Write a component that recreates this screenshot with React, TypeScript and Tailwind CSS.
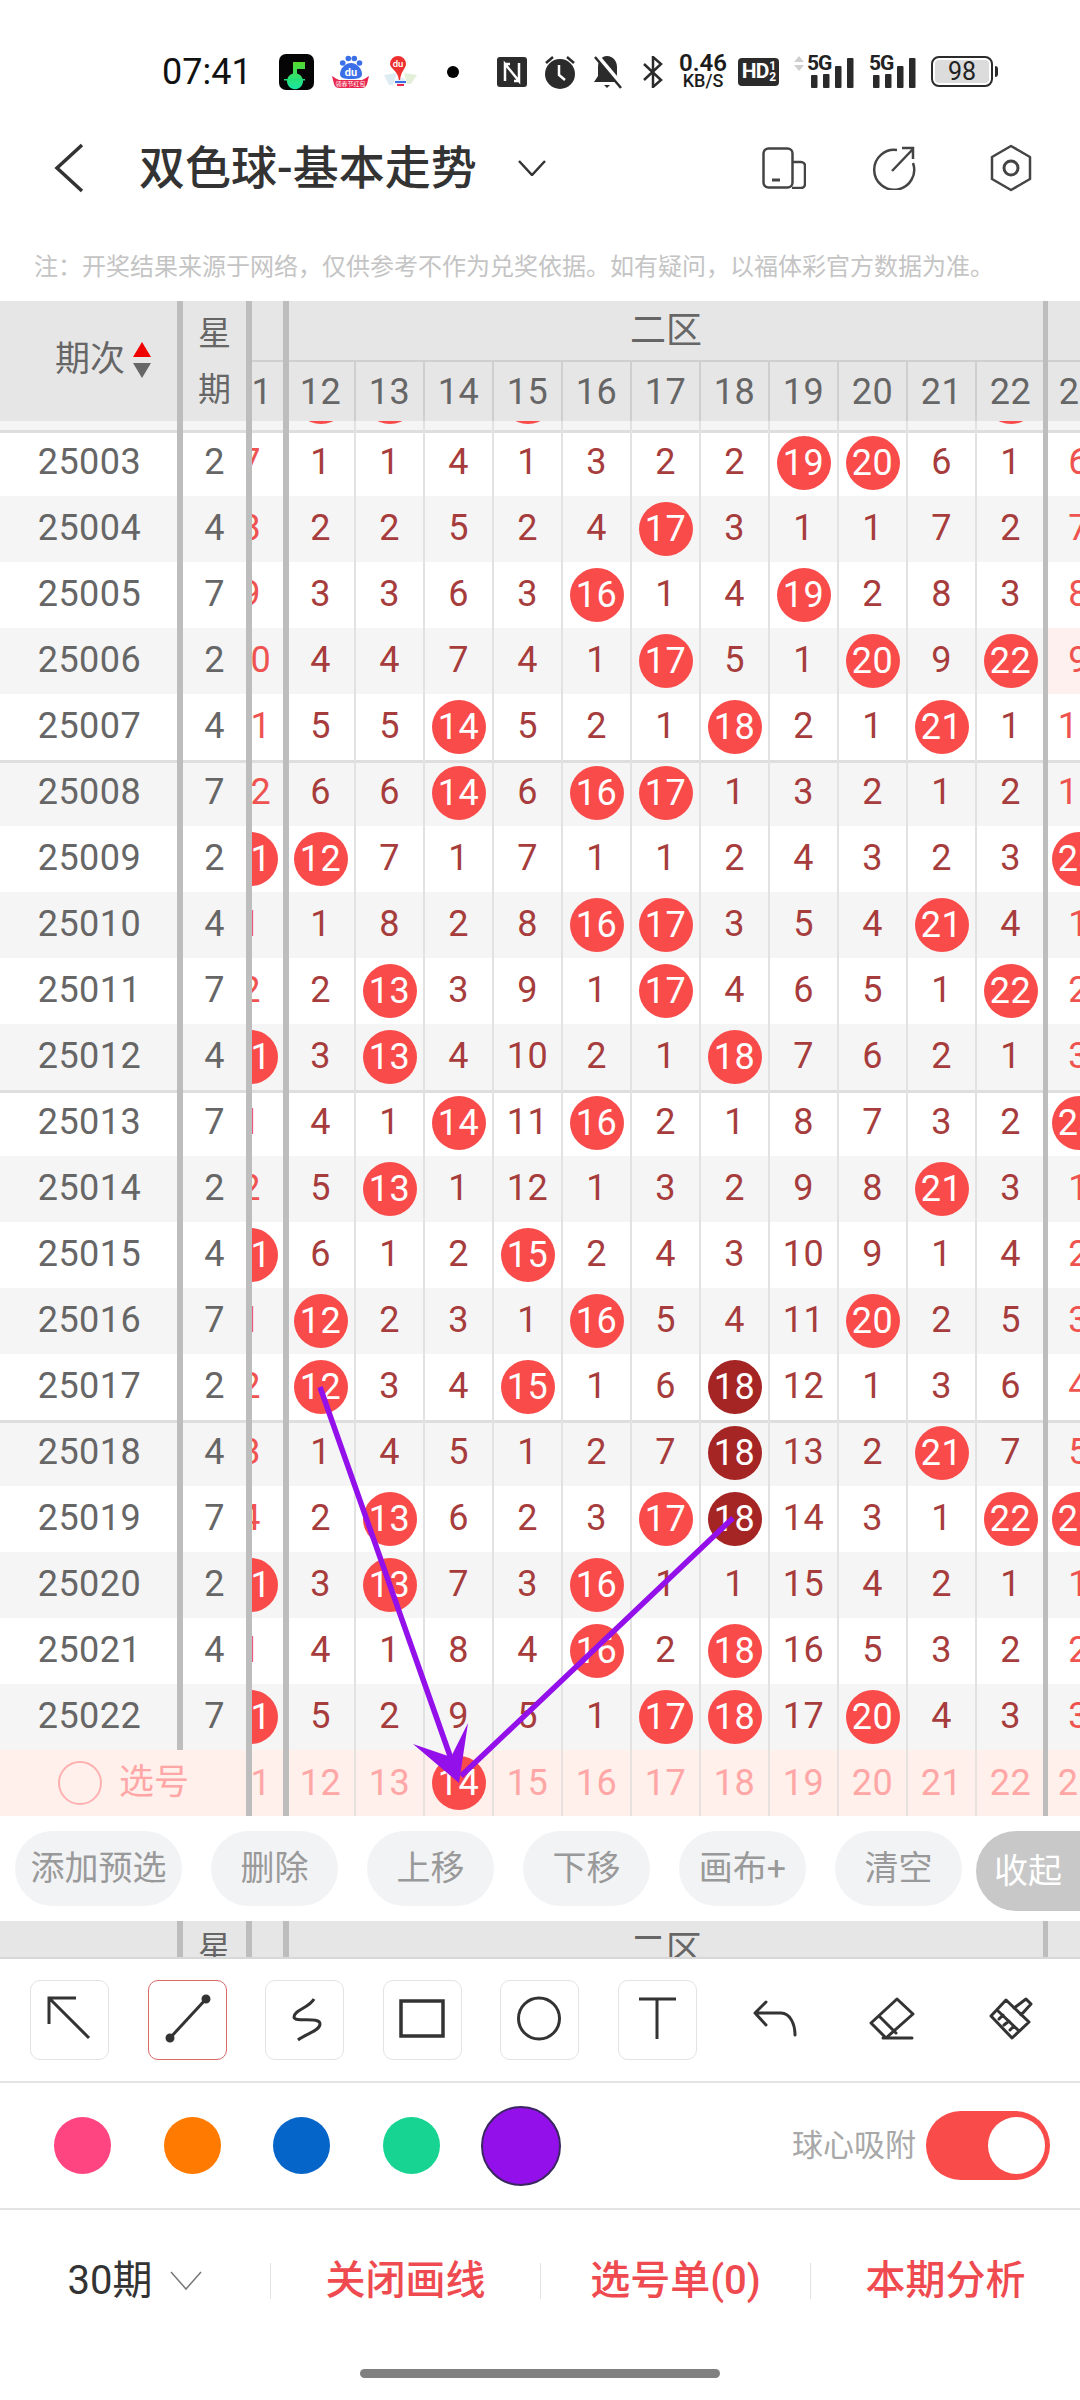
const rows: [number, number, number[]][] = [
  // 0 = hit ball, -1 = dark ball, columns run 11..23
  [25002, 7, [6, 0, 0, 3, 0, 2, 1, 1, 18, 19, 5, 0, 5]],
  [25003, 2, [7, 1, 1, 4, 1, 3, 2, 2, 0, 0, 6, 1, 6]],
  [25004, 4, [8, 2, 2, 5, 2, 4, 0, 3, 1, 1, 7, 2, 7]],
  [25005, 7, [9, 3, 3, 6, 3, 0, 1, 4, 0, 2, 8, 3, 8]],
  [25006, 2, [10, 4, 4, 7, 4, 1, 0, 5, 1, 0, 9, 0, 9]],
  [25007, 4, [11, 5, 5, 0, 5, 2, 1, 0, 2, 1, 0, 1, 10]],
  [25008, 7, [12, 6, 6, 0, 6, 0, 0, 1, 3, 2, 1, 2, 11]],
  [25009, 2, [0, 0, 7, 1, 7, 1, 1, 2, 4, 3, 2, 3, 0]],
  [25010, 4, [1, 1, 8, 2, 8, 0, 0, 3, 5, 4, 0, 4, 1]],
  [25011, 7, [2, 2, 0, 3, 9, 1, 0, 4, 6, 5, 1, 0, 2]],
  [25012, 4, [0, 3, 0, 4, 10, 2, 1, 0, 7, 6, 2, 1, 3]],
  [25013, 7, [1, 4, 1, 0, 11, 0, 2, 1, 8, 7, 3, 2, 0]],
  [25014, 2, [2, 5, 0, 1, 12, 1, 3, 2, 9, 8, 0, 3, 1]],
  [25015, 4, [0, 6, 1, 2, 0, 2, 4, 3, 10, 9, 1, 4, 2]],
  [25016, 7, [1, 0, 2, 3, 1, 0, 5, 4, 11, 0, 2, 5, 3]],
  [25017, 2, [2, 0, 3, 4, 0, 1, 6, -1, 12, 1, 3, 6, 4]],
  [25018, 4, [3, 1, 4, 5, 1, 2, 7, -1, 13, 2, 0, 7, 5]],
  [25019, 7, [4, 2, 0, 6, 2, 3, 0, -1, 14, 3, 1, 0, 0]],
  [25020, 2, [0, 3, 0, 7, 3, 0, 1, 1, 15, 4, 2, 1, 1]],
  [25021, 4, [1, 4, 1, 8, 4, 0, 2, 0, 16, 5, 3, 2, 2]],
  [25022, 7, [0, 5, 2, 9, 5, 1, 0, 0, 17, 0, 4, 3, 3]],
];

const mainCols = [12, 13, 14, 15, 16, 17, 18, 19, 20, 21, 22];

function Bar({ className = '' }: { className?: string }) {
  return <div className={`relative z-10 shrink-0 self-stretch bg-[#bdbdbd] ${className}`} />;
}

function Ball({ n, dark }: { n: number; dark?: boolean }) {
  return (
    <div className={`flex h-[54px] w-[54px] items-center justify-center rounded-full text-white ${dark ? 'bg-[#a52525]' : 'bg-[#fa4b4b]'}`}>
      {n}
    </div>
  );
}

function Cell({ col, value, edge, pink }: { col: number; value: number; edge?: boolean; pink?: boolean }) {
  return (
    <div className={`flex h-full w-[69px] shrink-0 items-center justify-center border-r-2 border-[#e2e2e2] ${edge ? 'text-[#ef5350]' : 'text-[#a63c3c]'} ${pink ? 'bg-[#fff0f0]' : ''} ${value > 0 ? 'pb-[2px]' : ''}`}>
      {value === 0 ? <Ball n={col} /> : value === -1 ? <Ball n={col} dark /> : value}
    </div>
  );
}

function Row({ id, week, cells, index }: { id: number; week: number; cells: number[]; index: number }) {
  const grouped = (id - 25003) % 5 === 0;
  return (
    <div className={`relative flex h-[66px] overflow-hidden text-[36px] tracking-[0.5px] ${index % 2 === 0 ? 'bg-[#f5f5f5]' : 'bg-white'} ${grouped ? 'shadow-[inset_0_3px_0_#dedede]' : ''}`}>
      <div className="flex w-[177px] shrink-0 items-center justify-center pb-[2px] pl-[2px] text-[#666]">{id}</div>
      <Bar className="w-[6px]" />
      <div className="flex w-[63px] shrink-0 items-center justify-center pb-[2px] text-[#666]">{week}</div>
      <Bar className="w-[6px]" />
      <div className="h-full w-[31px] shrink-0 overflow-hidden">
        <div className="-ml-[35px] h-full w-[69px]">
          <Cell col={11} value={cells[0]} edge />
        </div>
      </div>
      <Bar className="w-[6px]" />
      <div className="-ml-[2px] flex shrink-0">
        {mainCols.map((c, i) => (
          <Cell key={c} col={c} value={cells[i + 1]} />
        ))}
      </div>
      <Bar className="-ml-[3px] w-[5px]" />
      <div className="-ml-[3px] shrink-0">
        <Cell col={23} value={cells[12]} edge pink={id === 25006} />
      </div>
    </div>
  );
}

function PickCell({ n, ball }: { n: number; ball?: boolean }) {
  return (
    <div className="flex h-full w-[69px] shrink-0 items-center justify-center border-r-2 border-[#e8e2df] text-[#ffa6a6]">
      {ball ? <Ball n={n} /> : n}
    </div>
  );
}

function TableHead() {
  return (
    <div className="flex h-[120px] shrink-0 overflow-hidden bg-[#e6e6e6] text-[36px] tracking-[0.5px] text-[#666]">
      <div className="flex w-[177px] shrink-0 items-center pb-[2px] pl-[55px] text-[35px] tracking-normal">
        期次
        <svg viewBox="0 0 18 36" className="ml-[8px] h-[36px] w-[18px]">
          <polygon points="9,0 18,15 0,15" fill="#f00000" />
          <polygon points="0,21 18,21 9,36" fill="#666" />
        </svg>
      </div>
      <Bar className="w-[6px]" />
      <div className="flex w-[63px] shrink-0 flex-col items-center justify-center gap-[23px] text-[33px] leading-[33px] tracking-normal">
        <span>星</span>
        <span>期</span>
      </div>
      <Bar className="w-[6px]" />
      <div className="flex w-[31px] shrink-0 flex-col overflow-hidden">
        <div className="h-[59px] shrink-0 border-b-2 border-[#cfcfcf] box-content" />
        <div className="-ml-[35px] flex flex-1 items-center">
          <div className="flex w-[69px] shrink-0 justify-center">11</div>
        </div>
      </div>
      <Bar className="w-[6px]" />
      <div className="flex w-[754px] shrink-0 flex-col">
        <div className="flex h-[61px] shrink-0 items-center justify-center border-b-2 border-[#cfcfcf] text-[36px] tracking-normal">二区</div>
        <div className="-ml-[2px] flex flex-1">
          {mainCols.map((c) => (
            <div key={c} className="flex w-[69px] shrink-0 items-center justify-center border-r-2 border-[#cfcfcf]">{c}</div>
          ))}
        </div>
      </div>
      <Bar className="w-[5px]" />
      <div className="flex w-[69px] shrink-0 flex-col">
        <div className="h-[61px] shrink-0 border-b-2 border-[#cfcfcf]" />
        <div className="-ml-[3px] flex flex-1 items-center">
          <div className="flex w-[69px] shrink-0 justify-center">23</div>
        </div>
      </div>
    </div>
  );
}

function SignalBars({ className }: { className: string }) {
  return (
    <div className={`relative h-[34px] w-[48px] shrink-0 ${className}`}>
      <span className="absolute -top-[2px] left-0 text-[21px] leading-[21px] font-bold tracking-[-1px] text-[#222]">5G</span>
      <svg viewBox="0 0 48 34" className="absolute inset-0 h-[34px] w-[48px]" fill="#2a2a2a">
        <rect x="4" y="20" width="6.500" height="13" rx="1" />
        <rect x="16" y="19" width="6.500" height="14" rx="1" />
        <rect x="28" y="11" width="6.500" height="22" rx="1" />
        <rect x="40" y="3" width="6.500" height="30" rx="1" />
      </svg>
    </div>
  );
}

function StatusBar() {
  return (
    <div className="flex h-[142px] shrink-0 items-center pl-[162px] pt-[1px]">
      <span className="w-[91px] shrink-0 text-[36px] leading-none text-[#111]">07:41</span>
      <svg viewBox="0 0 35 36" className="ml-[26px] h-[36px] w-[35px] shrink-0">
        <defs>
          <linearGradient id="note" x1="0" y1="0" x2="0" y2="1">
            <stop offset="0" stopColor="#55d92c" />
            <stop offset="1" stopColor="#16e6a4" />
          </linearGradient>
        </defs>
        <rect width="35" height="36" rx="7" fill="#050505" />
        <path d="M14 8h12v7h-8v4.500a8 8 0 1 1-4 0z" fill="url(#note)" />
        <rect x="5" y="25" width="21" height="1.500" fill="#1fe07a" />
      </svg>
      <svg viewBox="0 0 39 33" className="ml-[17px] h-[33px] w-[39px] shrink-0">
        <circle cx="11.700" cy="8" r="2.800" fill="#3a6fe8" />
        <circle cx="17.300" cy="3.500" r="2.800" fill="#3a6fe8" />
        <circle cx="23.300" cy="3.500" r="2.800" fill="#3a6fe8" />
        <circle cx="28.500" cy="8" r="2.800" fill="#3a6fe8" />
        <path d="M20 8c6 0 11 6 11 11 0 4-4 5-11 5S9 23 9 19c0-5 5-11 11-11z" fill="#3a6fe8" />
        <text x="20" y="21" textAnchor="middle" fontSize="11" fontWeight="700" fill="#fff">du</text>
        <path d="M1 21c3 2 5 3 7 4h23c2-1 4-2 7-4l-2 8c-1 3-3 4-5 4H8c-2 0-4-1-5-4z" fill="#e8264e" />
        <text x="19.500" y="31" textAnchor="middle" fontSize="6" fill="#fff">领春节红包</text>
      </svg>
      <svg viewBox="0 0 35 33" className="ml-[13px] h-[33px] w-[35px] shrink-0">
        <path d="M1 20l13-2-4 12H6z" fill="#dcecf2" />
        <path d="M34 20l-13-2 3 11h4z" fill="#e3efd8" />
        <path d="M12 29h11l-2-6h-7z" fill="#e8edf6" />
        <rect x="12" y="26" width="11" height="2" fill="#3a6fe8" />
        <rect x="14" y="29" width="7" height="2" fill="#e8264e" />
        <path d="M15 1a8 8 0 0 1 8 8c0 4-5 7-6 16h-1C15 16 7 13 7 9a8 8 0 0 1 8-8z" fill="#ee2f2f" />
        <text x="15" y="12" textAnchor="middle" fontSize="9.500" fontWeight="500" fill="#fff">du</text>
      </svg>
      <div className="ml-[29px] h-[12px] w-[12px] shrink-0 rounded-full bg-black" />
      <svg viewBox="0 0 30 30" className="ml-[38px] h-[30px] w-[30px] shrink-0">
        <rect width="30" height="30" rx="3" fill="#2b2b2b" />
        <path d="M8 24V7l14 17V6M8 7h5M22 24h-5" fill="none" stroke="#fff" strokeWidth="2.500" />
      </svg>
      <svg viewBox="0 0 32 34" className="ml-[17px] h-[34px] w-[32px] shrink-0">
        <circle cx="16" cy="19" r="15" fill="#2b2b2b" />
        <path d="M15 10v10l6 5" fill="none" stroke="#fff" strokeWidth="2.500" />
        <path d="M2 8l7-6M30 8l-7-6" stroke="#2b2b2b" strokeWidth="2.500" />
      </svg>
      <svg viewBox="0 0 32 34" className="ml-[16px] h-[34px] w-[32px] shrink-0">
        <path d="M15 1c6 0 10 5 10 11v9l4 6H2l4-6v-9C6 6 9 1 15 1z" fill="#2b2b2b" />
        <path d="M12 30h6l-3 3z" fill="#2b2b2b" />
        <path d="M5 1l26 31" stroke="#fff" strokeWidth="5" />
        <path d="M3 2l26 31" stroke="#2b2b2b" strokeWidth="2.500" />
      </svg>
      <svg viewBox="0 0 20 32" className="ml-[19px] h-[32px] w-[20px] shrink-0">
        <path d="M1 8l17 16-8 7V1l8 7L1 24" fill="none" stroke="#2b2b2b" strokeWidth="2.500" />
      </svg>
      <div className="ml-[15px] flex w-[50px] shrink-0 flex-col items-center text-[#1c1c1c]">
        <span className="text-[24px] leading-[19px] font-semibold">0.46</span>
        <span className="text-[18px] leading-[16px] font-medium">KB/S</span>
      </div>
      <div className="ml-[10px] flex h-[28px] w-[41px] shrink-0 items-center justify-center gap-[1px] rounded-[4px] bg-[#2b2b2b] text-[21px] font-bold tracking-[-1px] text-white">
        HD
        <span className="flex flex-col text-[12px] leading-[11px]">
          <span>1</span>
          <span>2</span>
        </span>
      </div>
      <svg viewBox="0 0 10 16" className="ml-[15px] -mt-[16px] h-[16px] w-[10px] shrink-0" fill="#cfcfcf">
        <polygon points="5,0 10,6 0,6" />
        <polygon points="0,9 10,9 5,15" />
      </svg>
      <SignalBars className="ml-[3px]" />
      <SignalBars className="ml-[14px]" />
      <div className="relative ml-[14px] flex h-[31px] w-[62px] shrink-0 items-center justify-center rounded-[8px] border-[2.500px] border-[#2b2b2b] p-[2px]">
        <div className="flex h-full w-full items-center justify-center rounded-[4px] bg-[#dcdcdc] text-[25px] leading-none text-[#222]">98</div>
      </div>
      <div className="ml-[2px] h-[11px] w-[3px] shrink-0 rounded-r-sm bg-[#2b2b2b]" />
    </div>
  );
}

function TitleBar() {
  return (
    <div className="relative flex h-[52px] shrink-0 items-center pl-[54px] text-[#333]">
      <svg viewBox="0 0 30 50" className="h-[50px] w-[30px] shrink-0">
        <path d="M28 2L3 25l25 23" fill="none" stroke="#333" strokeWidth="3.500" />
      </svg>
      <span className="ml-[55px] w-[341px] shrink-0 text-[46px] leading-none font-medium whitespace-nowrap">双色球-基本走势</span>
      <svg viewBox="0 0 28 16" className="ml-[38px] h-[16px] w-[28px] shrink-0">
        <path d="M1 1l13 14L27 1" fill="none" stroke="#333" strokeWidth="2.500" />
      </svg>
      <svg viewBox="0 0 44 42" className="ml-[216px] h-[42px] w-[44px] shrink-0" fill="none" stroke="#444" strokeWidth="2.500">
        <rect x="1.500" y="1.500" width="29" height="39" rx="5" />
        <path d="M31 15h8a4 4 0 0 1 4 4v18a4 4 0 0 1-4 4h-9" />
        <path d="M10 33h8" strokeWidth="3" />
      </svg>
      <svg viewBox="0 0 44 44" className="ml-[66px] h-[44px] w-[44px] shrink-0" fill="none" stroke="#444" strokeWidth="2.500">
        <path d="M25 4A20 20 0 1 0 41 17" />
        <path d="M20 25L41 3M30 2h11v11" />
      </svg>
      <svg viewBox="0 0 44 48" className="ml-[73px] h-[48px] w-[44px] shrink-0" fill="none" stroke="#444" strokeWidth="2.500">
        <path d="M22 2l19 11v22L22 46 3 35V13z" strokeLinejoin="round" />
        <circle cx="22" cy="24" r="7" strokeWidth="3" />
      </svg>
    </div>
  );
}

const toolIcons = [
  <path key="a" d="M19 44V18h27M19 18l40 40" />,
  <g key="l"><path d="M22 58L58 19" /><circle cx="22" cy="58" r="3" fill="#333" /><circle cx="58" cy="19" r="3" fill="#333" /></g>,
  <path key="s" d="M49 19C44 28 29 30 29 37C29 43 55 36 55 44C55 51 40 54 33 60" />,
  <rect key="r" x="18" y="21" width="42" height="35" strokeWidth="3.500" />,
  <circle key="c" cx="39" cy="38.500" r="20.500" />,
  <path key="t" d="M21 19h37M39 19v40" />,
];

export default function App() {
  return (
    <div className="relative flex h-[2400px] w-[1080px] flex-col overflow-hidden bg-white font-['Roboto','Noto_Sans_CJK_SC',sans-serif]">
      <StatusBar />
      <TitleBar />
      <div className="flex h-[107px] shrink-0 items-center pl-[34px] pt-[39px] text-[24px] leading-none text-[#c4c4c4]">
        注：开奖结果来源于网络，仅供参考不作为兑奖依据。如有疑问，以福体彩官方数据为准。
      </div>

      <TableHead />

      <div className="h-[1329px] shrink-0 overflow-hidden">
        <div className="-mt-[57px]">
          {rows.map(([id, week, cells], i) => (
            <Row key={id} id={id} week={week} cells={cells} index={i} />
          ))}
        </div>
      </div>

      {/* 选号 row */}
      <div className="flex h-[66px] shrink-0 overflow-hidden bg-[#fff0eb] text-[36px] tracking-[0.5px]">
        <div className="flex w-[246px] shrink-0 items-center pl-[58px] text-[35px] tracking-normal text-[#ffa6a6]">
          <div className="h-[44px] w-[44px] shrink-0 rounded-full border-2 border-[#ffb0b0]" />
          <span className="ml-[17px]">选号</span>
        </div>
        <Bar className="w-[6px]" />
        <div className="h-full w-[31px] shrink-0 overflow-hidden">
          <div className="-ml-[35px] h-full w-[69px]">
            <PickCell n={11} />
          </div>
        </div>
        <Bar className="w-[6px]" />
        <div className="-ml-[2px] flex shrink-0">
          {mainCols.map((c) => (
            <PickCell key={c} n={c} ball={c === 14} />
          ))}
        </div>
        <Bar className="-ml-[3px] w-[5px]" />
        <div className="-ml-[3px] shrink-0">
          <PickCell n={23} />
        </div>
      </div>

      {/* action buttons */}
      <div className="relative flex h-[105px] shrink-0 items-start pl-[15px] pt-[15px] text-[34px] text-[#999]">
        <div className="flex h-[75px] w-[167px] shrink-0 items-center justify-center rounded-full bg-[#f2f3f5]">添加预选</div>
        <div className="ml-[29px] flex h-[75px] w-[127px] shrink-0 items-center justify-center rounded-full bg-[#f2f3f5]">删除</div>
        <div className="ml-[29px] flex h-[75px] w-[127px] shrink-0 items-center justify-center rounded-full bg-[#f2f3f5]">上移</div>
        <div className="ml-[29px] flex h-[75px] w-[127px] shrink-0 items-center justify-center rounded-full bg-[#f2f3f5]">下移</div>
        <div className="ml-[29px] flex h-[75px] w-[127px] shrink-0 items-center justify-center rounded-full bg-[#f2f3f5]">画布+</div>
        <div className="ml-[29px] flex h-[75px] w-[127px] shrink-0 items-center justify-center rounded-full bg-[#f2f3f5]">清空</div>
        <div className="absolute left-[976px] top-[15px] flex h-[80px] w-[104px] items-center rounded-l-full bg-[#c8c8c8] pl-[18px] text-[34px] whitespace-nowrap text-white">收起</div>
      </div>

      {/* next table's header, cut by the toolbar */}
      <div className="flex h-[38px] shrink-0 overflow-hidden border-b-2 border-[#d8d8d8] bg-[#e6e6e6] text-[33px] text-[#666]">
        <div className="w-[177px] shrink-0" />
        <Bar className="w-[6px]" />
        <div className="flex w-[63px] shrink-0 justify-center pt-[11px] leading-[33px]">星</div>
        <Bar className="w-[6px]" />
        <div className="w-[31px] shrink-0" />
        <Bar className="w-[6px]" />
        <div className="flex w-[754px] shrink-0 justify-center pt-[11px] text-[36px] leading-[36px]">二区</div>
        <Bar className="w-[5px]" />
      </div>

      {/* drawing tools */}
      <div className="flex h-[124px] shrink-0 items-start border-b-2 border-[#e4e4e4] pl-[30px] pt-[21px]">
        {toolIcons.map((icon, i) => (
          <div key={i} className={`mr-[38.500px] h-[80px] w-[79px] shrink-0 rounded-[10px] border ${i === 1 ? 'border-[#d9696b]' : 'border-[#e3e3e3]'}`}>
            <svg viewBox="0 0 79 80" className="-m-px h-[80px] w-[79px]" fill="none" stroke="#333" strokeWidth="3">
              {icon}
            </svg>
          </div>
        ))}
        <svg viewBox="0 0 44 38" className="ml-[18px] mt-[20px] h-[38px] w-[44px] shrink-0" fill="none" stroke="#333" strokeWidth="3" strokeLinecap="round" strokeLinejoin="round">
          <path d="M13 2L2 13l11 12M2 13H28C37 13 42 24 42 35" />
        </svg>
        <svg viewBox="0 0 46 43" className="ml-[72px] mt-[17px] h-[43px] w-[46px] shrink-0" fill="none" stroke="#333" strokeWidth="3" strokeLinecap="round" strokeLinejoin="round">
          <path d="M28 2l16 15-27 24L2 26zM10 19l17 17M14 41h29" />
        </svg>
        <svg viewBox="0 0 44 44" className="ml-[74px] mt-[17px] h-[44px] w-[44px] shrink-0" fill="none" stroke="#333" strokeWidth="3" strokeLinecap="round" strokeLinejoin="round">
          <path d="M17 3L2 19l21 22 17-16zM25 11L37 2l5 5-10 11M8 13l22 21M10 22l4-4M15 28l5-4M21 33l4-4" />
        </svg>
      </div>

      {/* colours + snap switch */}
      <div className="flex h-[127px] shrink-0 items-center border-b-2 border-[#e4e4e4] pl-[54px]">
        <div className="h-[57px] w-[57px] shrink-0 rounded-full bg-[#ff4581]" />
        <div className="ml-[53px] h-[57px] w-[57px] shrink-0 rounded-full bg-[#ff7a00]" />
        <div className="ml-[52px] h-[57px] w-[57px] shrink-0 rounded-full bg-[#0565c9]" />
        <div className="ml-[53px] h-[57px] w-[57px] shrink-0 rounded-full bg-[#18d492]" />
        <div className="ml-[41px] h-[80px] w-[80px] shrink-0 rounded-full border-2 border-[#3a2660] bg-[#9410ea]" />
        <span className="ml-[231px] w-[126px] shrink-0 text-[31px] leading-none whitespace-nowrap text-[#a8a8a8]">球心吸附</span>
        <div className="ml-[8px] flex h-[69px] w-[124px] shrink-0 items-center justify-end rounded-full bg-[#fa4b4b] pr-[5px]">
          <div className="h-[57px] w-[57px] rounded-full bg-white" />
        </div>
      </div>

      {/* bottom actions */}
      <div className="flex h-[140px] shrink-0 items-center pt-[2px] text-[40px] leading-none text-[#ef4a4f]">
        <div className="flex w-[270px] shrink-0 items-center justify-center text-[#333]">
          <span>30期</span>
          <svg viewBox="0 0 32 20" className="ml-[18px] h-[20px] w-[32px]">
            <path d="M1 1l15 17L31 1" fill="none" stroke="#777" strokeWidth="1.500" />
          </svg>
        </div>
        <div className="h-[36px] w-px shrink-0 bg-[#e2e2e2]" />
        <div className="flex w-[269px] shrink-0 justify-center font-medium">关闭画线</div>
        <div className="h-[36px] w-px shrink-0 bg-[#e2e2e2]" />
        <div className="flex w-[269px] shrink-0 justify-center font-medium">选号单(0)</div>
        <div className="h-[36px] w-px shrink-0 bg-[#e2e2e2]" />
        <div className="flex w-[269px] shrink-0 justify-center font-medium">本期分析</div>
      </div>

      <div className="mx-auto mt-[19px] h-[9px] w-[360px] shrink-0 rounded-full bg-[#808080]" />

      {/* arrows drawn over the chart */}
      <svg viewBox="0 0 1080 2400" className="pointer-events-none absolute left-0 top-0 z-20 h-[2400px] w-[1080px]">
        <path d="M320 1387L455 1770M733 1518L461 1776" fill="none" stroke="#9410ea" strokeWidth="5.500" />
        <polygon points="459,1783 468,1723 451,1757 413,1744" fill="#9410ea" />
      </svg>
    </div>
  );
}
